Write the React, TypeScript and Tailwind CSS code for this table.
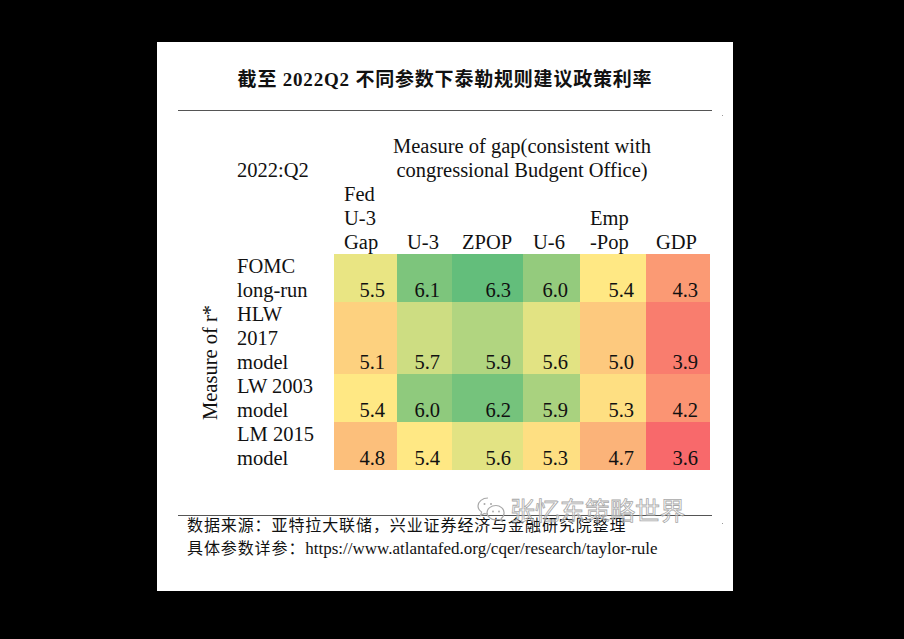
import React from "react";

const serif = { fontFamily: '"Liberation Serif", "Noto Sans CJK SC", serif' };

const cols = [
  { h: ["Fed", "U-3", "Gap"] },
  { h: ["U-3"] },
  { h: ["ZPOP"] },
  { h: ["U-6"] },
  { h: ["Emp", "-Pop"] },
  { h: ["GDP"] },
];

const rows: { label: string[]; h: string; v: string[]; c: string[] }[] = [
  {
    label: ["FOMC", "long-run"],
    h: "h-[48px]",
    v: ["5.5", "6.1", "6.3", "6.0", "5.4", "4.3"],
    c: ["bg-[#e9e583]", "bg-[#7dc57c]", "bg-[#63be7b]", "bg-[#94cb7d]", "bg-[#ffe884]", "bg-[#fb9a74]"],
  },
  {
    label: ["HLW", "2017", "model"],
    h: "h-[72px]",
    v: ["5.1", "5.7", "5.9", "5.6", "5.0", "3.9"],
    c: ["bg-[#fdd17f]", "bg-[#cddd82]", "bg-[#b1d580]", "bg-[#e2e383]", "bg-[#fdc97e]", "bg-[#f97d6e]"],
  },
  {
    label: ["LW 2003", "model"],
    h: "h-[48px]",
    v: ["5.4", "6.0", "6.2", "5.9", "5.3", "4.2"],
    c: ["bg-[#ffe884]", "bg-[#8fca7d]", "bg-[#75c37c]", "bg-[#a9d27f]", "bg-[#fedf82]", "bg-[#fb9473]"],
  },
  {
    label: ["LM 2015", "model"],
    h: "h-[48px]",
    v: ["4.8", "5.4", "5.6", "5.3", "4.7", "3.6"],
    c: ["bg-[#fcbf7b]", "bg-[#ffe884]", "bg-[#e2e383]", "bg-[#fedf82]", "bg-[#fbb379]", "bg-[#f8696b]"],
  },
];

const widths = ["w-[63px]", "w-[55px]", "w-[71px]", "w-[57px]", "w-[66px]", "w-[64px]"];

function WeChat() {
  return (
    <svg width="32" height="28" viewBox="0 0 32 28" fill="none" stroke="#a8a8a8" strokeWidth="1.2">
      <path d="M12 3C6.5 3 2 6.6 2 11c0 2.5 1.4 4.6 3.6 6.1L4.6 20.5l3.8-2c1.1.3 2.3.5 3.6.5" />
      <circle cx="8.5" cy="9" r="1" fill="#a8a8a8" stroke="none" />
      <circle cx="15" cy="9" r="1" fill="#a8a8a8" stroke="none" />
      <path d="M20 10.5c-5 0-9 3.2-9 7.2s4 7.2 9 7.2c1 0 2-.1 2.9-.4l3.2 1.7-.9-2.8c1.8-1.3 2.9-3.3 2.9-5.7 0-4-4-7.2-8.1-7.2z" />
      <circle cx="17" cy="16.5" r="0.9" fill="#a8a8a8" stroke="none" />
      <circle cx="23" cy="16.5" r="0.9" fill="#a8a8a8" stroke="none" />
    </svg>
  );
}

export default function App() {
  return (
    <div className="w-[904px] h-[639px] bg-black pt-[42px] pl-[157px]">
      <div className="relative w-[576px] h-[549px] bg-white flex flex-col text-[#111]" style={serif}>
        <div className="h-[68px] pt-[8px] flex items-center justify-center">
          <span className="text-[19px] font-bold tracking-[0.8px]">截至 2022Q2 不同参数下泰勒规则建议政策利率</span>
        </div>
        <div className="mx-[21px] h-px bg-[#555]" />

        <div className="mt-[23px] flex text-[20.5px] leading-[24px]">
          <div className="w-[71px] flex flex-col">
            <div className="h-[120px]" />
            <div className="h-[216px] flex items-center justify-end pr-[6px]">
              <span className="[writing-mode:vertical-rl] rotate-180 whitespace-nowrap">Measure of r*</span>
            </div>
          </div>
          <div className="flex flex-col">
            <div className="flex h-[48px]">
              <div className="w-[106px] pl-[9px] flex items-end">2022:Q2</div>
              <div className="w-[376px] flex flex-col items-center">
                <div>Measure of gap(consistent with</div>
                <div>congressional Budgent Office)</div>
              </div>
            </div>
            <div className="flex h-[72px]">
              <div className="w-[106px]" />
              {cols.map((c, i) => (
                <div key={i} className={`${widths[i]} pl-[10px] flex flex-col justify-end`}>
                  {c.h.map((t) => (
                    <div key={t}>{t}</div>
                  ))}
                </div>
              ))}
            </div>
            {rows.map((r, ri) => (
              <div key={ri} className={`flex ${r.h}`}>
                <div className="w-[106px] pl-[9px] flex flex-col">
                  {r.label.map((t) => (
                    <div key={t}>{t}</div>
                  ))}
                </div>
                {r.v.map((v, i) => (
                  <div key={i} className={`${widths[i]} ${r.c[i]} flex items-end justify-end pr-[12px]`}>
                    {v}
                  </div>
                ))}
              </div>
            ))}
          </div>
        </div>

        <div className="mt-[45px] mx-[21px] h-px bg-[#555]" />
        <div className="pl-[30px] -mt-[2px] text-[16px] leading-[23px]">
          <div className="tracking-[0.9px]">数据来源：亚特拉大联储，兴业证券经济与金融研究院整理</div>
          <div>
            <span className="tracking-[0.9px]">具体参数详参：</span>
            <span className="text-[17px]">https://www.atlantafed.org/cqer/research/taylor-rule</span>
          </div>
        </div>

        <div className="absolute left-[319px] top-[452px] flex items-center gap-[2px]">
          <WeChat />
          <span
            className="text-[25px] leading-[30px] text-white/40 [-webkit-text-stroke:0.8px_#a8a8a8]"
            style={{ fontFamily: '"Noto Sans CJK SC", sans-serif' }}
          >
            张忆东策略世界
          </span>
        </div>
        <div className="absolute left-[565px] top-[73px] w-px h-px bg-[#999]" />
        <div className="absolute left-[565px] top-[481px] w-px h-px bg-[#999]" />
      </div>
    </div>
  );
}
